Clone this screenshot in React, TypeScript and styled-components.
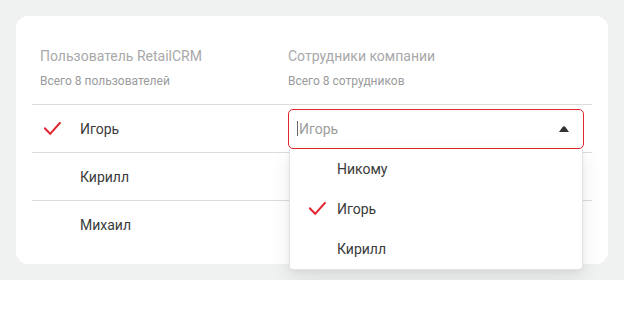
import React from "react";
import styled, { createGlobalStyle } from "styled-components";

const Global = createGlobalStyle`
  html, body { margin: 0; padding: 0; background: #ffffff; }
  body { font-family: Roboto, "Noto Sans", Arial, sans-serif; }
  * { box-sizing: border-box; }
`;

const Page = styled.div`
  background: #f0f1f1;
  padding: 16px;
  height: 280px;
`;

const Card = styled.div`
  background: #ffffff;
  border-radius: 12px;
  padding: 32px 16px 16px;
`;

const Grid = styled.div`
  display: grid;
  grid-template-columns: 248px 296px;
  padding: 0 8px;
  align-items: center;
`;

const Header = styled(Grid)`
  padding-bottom: 15px;
`;

const HeadCol = styled.div`
  display: flex;
  flex-direction: column;
  gap: 9px;
`;

const Title = styled.div`
  font-size: 14px;
  line-height: 16px;
  color: #a8a9aa;
`;

const Sub = styled.div`
  font-size: 12px;
  line-height: 16px;
  color: #9a9b9c;
`;

const Row = styled(Grid)`
  height: 48px;
  border-top: 1px solid #dcdcdc;
`;

const NameCell = styled.div`
  display: flex;
  align-items: center;
  height: 100%;
`;

const CheckSlot = styled.div`
  width: 40px;
  display: flex;
  align-items: center;
  padding-left: 4px;
`;

const Name = styled.span`
  font-size: 14px;
  color: #3a3a3a;
`;

const SelectWrap = styled.div`
  position: relative;
`;

const SelectBox = styled.div`
  height: 40px;
  border: 1px solid #e1262f;
  border-radius: 5px;
  display: flex;
  align-items: center;
  padding: 0 14px 0 8px;
  background: #fff;
`;

const Caret = styled.span`
  width: 1px;
  height: 15px;
  background: #666;
  margin-right: 1px;
`;

const Placeholder = styled.span`
  flex: 1;
  font-size: 14px;
  color: #9c9c9c;
`;

const Menu = styled.div`
  position: absolute;
  top: 100%;
  left: 1px;
  right: 1px;
  background: #fff;
  border: 1px solid #e2e2e2;
  border-top: none;
  border-radius: 0 0 4px 4px;
  box-shadow: 0 8px 20px rgba(0, 0, 0, 0.09), 0 2px 4px rgba(0, 0, 0, 0.04);
  z-index: 2;
`;

const Option = styled.div`
  height: 40px;
  display: flex;
  align-items: center;
  padding-left: 19px;
`;

const OptCheck = styled.div`
  width: 28px;
  display: flex;
  align-items: center;
`;

const Check = () => (
  <svg width="17" height="14" viewBox="0 0 17 14">
    <path d="M1 6.5 L6.2 11.8 L15.8 1" fill="none" stroke="#e1262f" strokeWidth="2" strokeLinecap="square" />
  </svg>
);

const Arrow = () => (
  <svg width="10" height="6" viewBox="0 0 10 6">
    <path d="M0 6 L3.6 1 Q5 -0.6 6.4 1 L10 6 Z" fill="#333" />
  </svg>
);

const users = ["Игорь", "Кирилл", "Михаил"];
const options = [
  { name: "Никому", checked: false },
  { name: "Игорь", checked: true },
  { name: "Кирилл", checked: false },
];

export default function App() {
  return (
    <>
      <Global />
      <Page>
        <Card>
          <Header>
            <HeadCol>
              <Title>Пользователь RetailCRM</Title>
              <Sub>Всего 8 пользователей</Sub>
            </HeadCol>
            <HeadCol>
              <Title>Сотрудники компании</Title>
              <Sub>Всего 8 сотрудников</Sub>
            </HeadCol>
          </Header>
          {users.map((u, i) => (
            <Row key={u}>
              <NameCell>
                <CheckSlot>{i === 0 && <Check />}</CheckSlot>
                <Name>{u}</Name>
              </NameCell>
              <div>
                {i === 0 && (
                  <SelectWrap>
                    <SelectBox>
                      <Caret />
                      <Placeholder>Игорь</Placeholder>
                      <Arrow />
                    </SelectBox>
                    <Menu>
                      {options.map((o) => (
                        <Option key={o.name}>
                          <OptCheck>{o.checked && <Check />}</OptCheck>
                          <Name>{o.name}</Name>
                        </Option>
                      ))}
                    </Menu>
                  </SelectWrap>
                )}
              </div>
            </Row>
          ))}
        </Card>
      </Page>
    </>
  );
}
